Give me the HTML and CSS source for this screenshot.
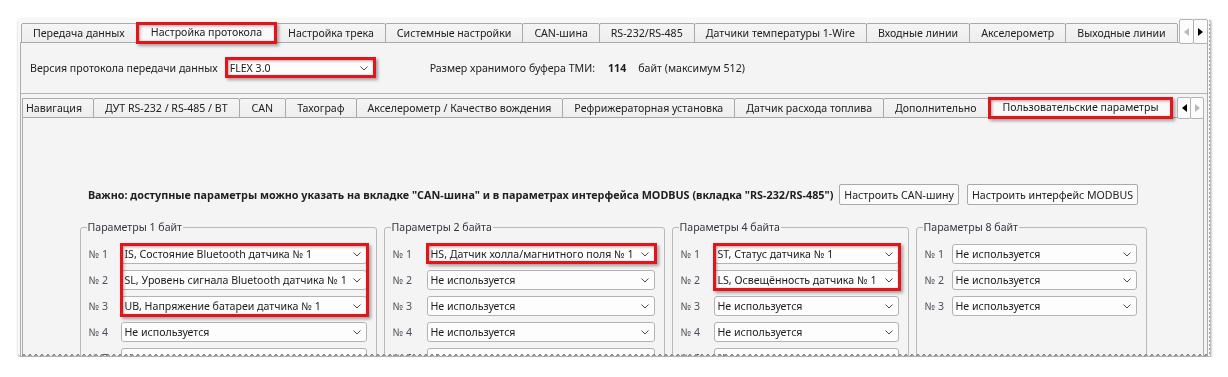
FILE: index.html
```html
<!DOCTYPE html>
<html lang="ru">
<head>
    <meta charset="UTF-8">
    <title>Настройка протокола</title>
    <link rel="stylesheet" href="styles.css">
</head>
<body>

<div class="sheet">
  <div class="window">

    <div class="tabbar">
      <div class="tabs">
        <div class="tab">Передача данных</div>
        <div class="tab active hl">Настройка протокола</div>
        <div class="tab">Настройка трека</div>
        <div class="tab">Системные настройки</div>
        <div class="tab">CAN-шина</div>
        <div class="tab">RS-232/RS-485</div>
        <div class="tab">Датчики температуры 1-Wire</div>
        <div class="tab">Входные линии</div>
        <div class="tab">Акселерометр</div>
        <div class="tab">Выходные линии</div>
      </div>
      <div class="scroller">
        <span class="arrow"><i class="tri left off"></i></span>
        <span class="arrow"><i class="tri right"></i></span>
      </div>
    </div>

    <div class="pane outer">
      <div class="proto">
        <span>Версия протокола передачи данных</span>
        <div class="combo hl"><span>FLEX 3.0</span><svg class="dd" viewBox="0 0 8 5"><path d="M.5 .5 4 4 7.5 .5"/></svg></div>
        <span class="buf">Размер хранимого буфера ТМИ:</span>
        <b>114</b>
        <span>байт (максимум 512)</span>
      </div>

      <div class="sub">
        <div class="tabbar subbar">
          <div class="tabs">
            <div class="tab cut">Навигация</div>
            <div class="tab">ДУТ RS-232 / RS-485 / BT</div>
            <div class="tab wide">CAN</div>
            <div class="tab">Тахограф</div>
            <div class="tab">Акселерометр / Качество вождения</div>
            <div class="tab">Рефрижераторная установка</div>
            <div class="tab">Датчик расхода топлива</div>
            <div class="tab">Дополнительно</div>
            <div class="tab active hl">Пользовательские параметры</div>
          </div>
          <div class="scroller">
            <span class="arrow"><i class="tri left"></i></span>
            <span class="arrow"><i class="tri right off"></i></span>
          </div>
        </div>

        <div class="pane inner">
          <div class="note">
            <b>Важно: доступные параметры можно указать на вкладке "CAN-шина" и в параметрах интерфейса MODBUS (вкладка "RS-232/RS-485")</b>
            <button class="btn">Настроить CAN-шину</button>
            <button class="btn">Настроить интерфейс MODBUS</button>
          </div>

          <div class="groups">
            <fieldset class="group g1">
              <legend>Параметры 1 байт</legend>
              <div class="rows">
                <div class="mark">
                  <div class="row"><span class="num">№ 1</span><div class="combo"><span>IS, Состояние Bluetooth датчика № 1</span><svg class="dd" viewBox="0 0 8 5"><path d="M.5 .5 4 4 7.5 .5"/></svg></div></div>
                  <div class="row"><span class="num">№ 2</span><div class="combo"><span>SL, Уровень сигнала Bluetooth датчика № 1</span><svg class="dd" viewBox="0 0 8 5"><path d="M.5 .5 4 4 7.5 .5"/></svg></div></div>
                  <div class="row"><span class="num">№ 3</span><div class="combo"><span>UB, Напряжение батареи датчика № 1</span><svg class="dd" viewBox="0 0 8 5"><path d="M.5 .5 4 4 7.5 .5"/></svg></div></div>
                </div>
                <div class="row"><span class="num">№ 4</span><div class="combo"><span>Не используется</span><svg class="dd" viewBox="0 0 8 5"><path d="M.5 .5 4 4 7.5 .5"/></svg></div></div>
                <div class="row"><span class="num">№ 5</span><div class="combo"><span>Не используется</span><svg class="dd" viewBox="0 0 8 5"><path d="M.5 .5 4 4 7.5 .5"/></svg></div></div>
                <div class="row"><span class="num">№ 6</span><div class="combo"><span>Не используется</span><svg class="dd" viewBox="0 0 8 5"><path d="M.5 .5 4 4 7.5 .5"/></svg></div></div>
              </div>
            </fieldset>

            <fieldset class="group g2">
              <legend>Параметры 2 байта</legend>
              <div class="rows">
                <div class="row"><span class="num">№ 1</span><div class="combo hl"><span>HS, Датчик холла/магнитного поля № 1</span><svg class="dd" viewBox="0 0 8 5"><path d="M.5 .5 4 4 7.5 .5"/></svg></div></div>
                <div class="row"><span class="num">№ 2</span><div class="combo"><span>Не используется</span><svg class="dd" viewBox="0 0 8 5"><path d="M.5 .5 4 4 7.5 .5"/></svg></div></div>
                <div class="row"><span class="num">№ 3</span><div class="combo"><span>Не используется</span><svg class="dd" viewBox="0 0 8 5"><path d="M.5 .5 4 4 7.5 .5"/></svg></div></div>
                <div class="row"><span class="num">№ 4</span><div class="combo"><span>Не используется</span><svg class="dd" viewBox="0 0 8 5"><path d="M.5 .5 4 4 7.5 .5"/></svg></div></div>
                <div class="row"><span class="num">№ 5</span><div class="combo"><span>Не используется</span><svg class="dd" viewBox="0 0 8 5"><path d="M.5 .5 4 4 7.5 .5"/></svg></div></div>
                <div class="row"><span class="num">№ 6</span><div class="combo"><span>Не используется</span><svg class="dd" viewBox="0 0 8 5"><path d="M.5 .5 4 4 7.5 .5"/></svg></div></div>
              </div>
            </fieldset>

            <fieldset class="group g3">
              <legend>Параметры 4 байта</legend>
              <div class="rows">
                <div class="mark">
                  <div class="row"><span class="num">№ 1</span><div class="combo"><span>ST, Статус датчика № 1</span><svg class="dd" viewBox="0 0 8 5"><path d="M.5 .5 4 4 7.5 .5"/></svg></div></div>
                  <div class="row"><span class="num">№ 2</span><div class="combo"><span>LS, Освещённость датчика № 1</span><svg class="dd" viewBox="0 0 8 5"><path d="M.5 .5 4 4 7.5 .5"/></svg></div></div>
                </div>
                <div class="row"><span class="num">№ 3</span><div class="combo"><span>Не используется</span><svg class="dd" viewBox="0 0 8 5"><path d="M.5 .5 4 4 7.5 .5"/></svg></div></div>
                <div class="row"><span class="num">№ 4</span><div class="combo"><span>Не используется</span><svg class="dd" viewBox="0 0 8 5"><path d="M.5 .5 4 4 7.5 .5"/></svg></div></div>
                <div class="row"><span class="num">№ 5</span><div class="combo"><span>Не используется</span><svg class="dd" viewBox="0 0 8 5"><path d="M.5 .5 4 4 7.5 .5"/></svg></div></div>
                <div class="row"><span class="num">№ 6</span><div class="combo"><span>Не используется</span><svg class="dd" viewBox="0 0 8 5"><path d="M.5 .5 4 4 7.5 .5"/></svg></div></div>
              </div>
            </fieldset>

            <fieldset class="group g4">
              <legend>Параметры 8 байт</legend>
              <div class="rows">
                <div class="row"><span class="num">№ 1</span><div class="combo"><span>Не используется</span><svg class="dd" viewBox="0 0 8 5"><path d="M.5 .5 4 4 7.5 .5"/></svg></div></div>
                <div class="row"><span class="num">№ 2</span><div class="combo"><span>Не используется</span><svg class="dd" viewBox="0 0 8 5"><path d="M.5 .5 4 4 7.5 .5"/></svg></div></div>
                <div class="row"><span class="num">№ 3</span><div class="combo"><span>Не используется</span><svg class="dd" viewBox="0 0 8 5"><path d="M.5 .5 4 4 7.5 .5"/></svg></div></div>
              </div>
            </fieldset>
          </div>
        </div>
      </div>
    </div>

  </div>
</div>

</body>
</html>
```

FILE: styles.css
```css
* { box-sizing: border-box; }
body { margin: 0; background: #fff; font: 10.6px/14px "Noto Sans", "Open Sans", sans-serif; color: #202020; }

/* torn screenshot sheet */
.sheet { padding: 17px 0 0 18px; filter: drop-shadow(1px 2px 1.5px rgba(0,0,0,.5)); }
.window {
    width: 1193px; height: 340px; overflow: hidden;
    background: #f8f8f8; padding: 4px 3px 0 2px;
    -webkit-mask:
        conic-gradient(from 135deg at top, #0000, #000 1deg 89deg, #0000 90deg) 0 0 / 4px 100% repeat-x,
        conic-gradient(from -45deg at bottom, #0000, #000 1deg 89deg, #0000 90deg) 0 0 / 6px 100% repeat-x,
        conic-gradient(from 225deg at right, #0000, #000 1deg 89deg, #0000 90deg) 0 0 / 100% 4px repeat-y;
    -webkit-mask-composite: source-in;
    mask:
        conic-gradient(from 135deg at top, #0000, #000 1deg 89deg, #0000 90deg) 0 0 / 4px 100% repeat-x,
        conic-gradient(from -45deg at bottom, #0000, #000 1deg 89deg, #0000 90deg) 0 0 / 6px 100% repeat-x,
        conic-gradient(from 225deg at right, #0000, #000 1deg 89deg, #0000 90deg) 0 0 / 100% 4px repeat-y;
    mask-composite: intersect;
}

/* tab bars */
.tabbar { display: flex; height: 22px; margin-bottom: -1px; position: relative; z-index: 1; }
.tabs { flex: 1; min-width: 0; display: flex; align-items: flex-end; padding-left: 1px; }
.subbar .tabs { padding-left: 0; }
.tab {
    flex: none; height: 20px; line-height: 18px; padding: 0 11px; margin-right: -1px;
    border: 1px solid #a9a9a9; border-radius: 2px 2px 0 0;
    background: linear-gradient(#f5f5f5, #ededed); white-space: nowrap;
}
.tab.wide { padding: 0 12px; }
.tab.cut { padding-left: 3px; border-radius: 0 2px 0 0; }
.tab.active {
    height: 22px; margin-bottom: -1px; padding: 0 14px;
    background: #f9f9f9; border-bottom-color: transparent; z-index: 1;
}

.scroller { flex: none; display: flex; align-self: flex-end; margin-bottom: -1px; position: relative; z-index: 2; }
.arrow {
    width: 15px; height: 25px; margin-left: -1px;
    border: 1px solid #b3b3b3; border-radius: 2px; background: #fcfcfc;
    display: flex; align-items: center; justify-content: center;
}
.subbar .arrow { width: 14px; height: 22px; }
.tri { width: 0; height: 0; border: 4px solid transparent; }
.tri.left { border-left: 0; border-right: 5px solid #000; }
.tri.right { border-right: 0; border-left: 5px solid #000; }
.tri.left.off { border-right-color: #b9b9b9; }
.tri.right.off { border-left-color: #b9b9b9; }

/* panes */
.pane { border: 1px solid #acacac; background: #f4f4f4; }
.outer { height: 400px; }
.proto { height: 50px; display: flex; align-items: center; padding-left: 9px; }
.proto .combo { width: 148px; margin-left: 8px; }
.buf { margin-left: 56px; }
.proto b { margin: 0 12px 0 13px; }
.sub { border-top: 1px solid #b4b4b4; padding: 2px 3px 0 1px; }
.inner { height: 320px; padding-top: 66px; }

.note { display: flex; align-items: center; justify-content: center; gap: 6px; height: 21px; }
.note b { font-size: 10.8px; }
.btn {
    font: inherit; color: inherit; height: 21px; padding: 0 4px;
    border: 1px solid #a9a9a9; border-radius: 2px; background: #fbfbfb;
}
.btn + .btn { margin-left: 2px; }

/* parameter groups */
.groups {
    display: grid; grid-template-columns: 297px 281px 237px 231px; gap: 7px;
    justify-content: center; margin-top: 15px; height: 200px;
}
.group { margin: 0; padding: 10px 9px 0 8px; border: 1px solid #b9b9b9; border-radius: 3px; min-width: 0; }
.group legend { padding: 0 1px; margin-left: -2px; line-height: 14px; color: #39323f; }
.g1 { --lab: 32px; }
.g2 { --lab: 34px; }
.g3 { --lab: 33px; }
.g4 { --lab: 27px; }
.rows, .mark { display: flex; flex-direction: column; gap: 6px; }
.row { display: grid; grid-template-columns: var(--lab) 1fr; align-items: center; }
.num { color: #4a505a; }

.combo {
    height: 20px; min-width: 0; display: flex; align-items: center; padding: 0 5px 0 3px;
    border: 1px solid #b3b3b3; border-radius: 3px; background: #fdfdfd; white-space: nowrap;
}
.combo span { flex: 1; overflow: hidden; }
.dd { flex: none; width: 8px; height: 5px; fill: none; stroke: #4a4a4a; stroke-width: 1; }

/* red annotation frames */
.hl, .mark { position: relative; }
.hl::after, .mark::after {
    content: ""; position: absolute; pointer-events: none; z-index: 3;
    border: 3px solid #e5141b;
    box-shadow: 2px 2px 3px rgba(0,0,0,.35), inset 1px 1px 3px rgba(0,0,0,.35);
}
.tab.hl::after { inset: -1px -1px -1px -1px; }
.combo.hl::after { inset: -2px -3px -1px -2px; }
.mark::after { top: -1px; bottom: -1px; left: calc(var(--lab) - 1px); right: -2px; }
```
